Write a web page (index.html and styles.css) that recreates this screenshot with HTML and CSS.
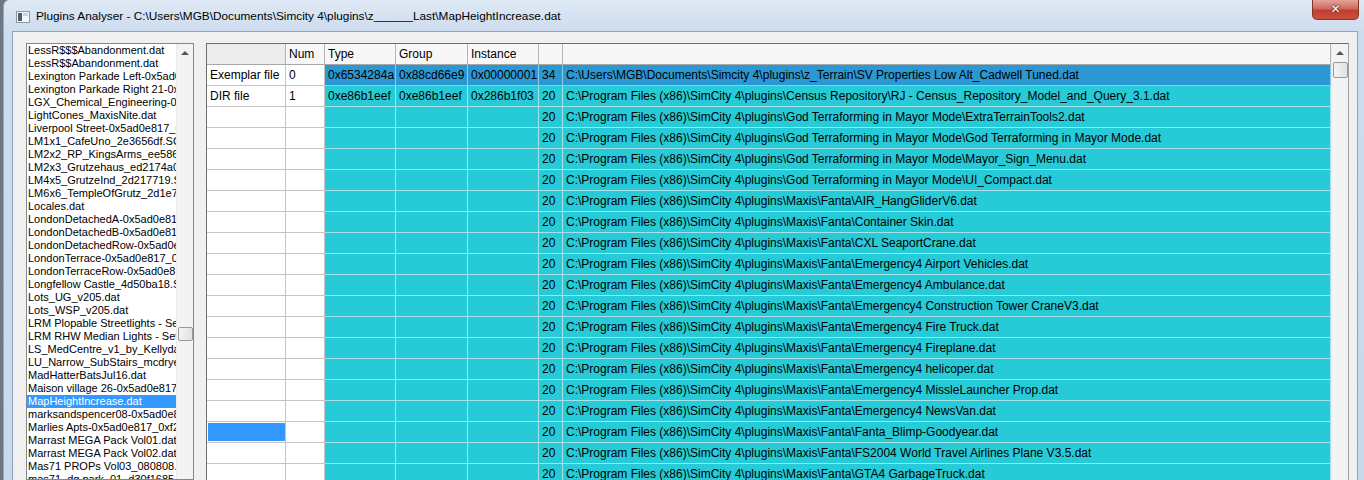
FILE: index.html
```html
<!DOCTYPE html>
<html lang="en">
<head>
  <meta charset="UTF-8">
  <title>Plugins Analyser</title>
  <link rel="stylesheet" href="styles.css">
</head>
<body>

  <div class="window">
    <div class="titlebar">
      <svg class="app-icon" width="14" height="12" viewBox="0 0 14 12">
        <rect x="0.5" y="0.5" width="13" height="11" fill="#f4f6f8" stroke="#8a96a4"/>
        <rect x="2" y="2" width="4" height="8" fill="#4d6070"/>
        <rect x="7" y="2" width="5" height="3" fill="#c9d3dc"/>
      </svg>
      <span class="title">Plugins Analyser - C:\Users\MGB\Documents\Simcity 4\plugins\z______Last\MapHeightIncrease.dat</span>
      <div class="close-btn">&#x2715;</div>
    </div>

    <div class="client">
      <!-- plugin file list -->
      <div class="filelist">
        <ul class="files">
          <li>LessR$$$Abandonment.dat</li>
          <li>LessR$$Abandonment.dat</li>
          <li>Lexington Parkade Left-0x5ad0</li>
          <li>Lexington Parkade Right 21-0x</li>
          <li>LGX_Chemical_Engineering-0x</li>
          <li>LightCones_MaxisNite.dat</li>
          <li>Liverpool Street-0x5ad0e817_0</li>
          <li>LM1x1_CafeUno_2e3656df.SC</li>
          <li>LM2x2_RP_KingsArms_ee5860</li>
          <li>LM2x3_Grutzehaus_ed2174a0</li>
          <li>LM4x5_GrutzeInd_2d217719.S</li>
          <li>LM6x6_TempleOfGrutz_2d1e74</li>
          <li>Locales.dat</li>
          <li>LondonDetachedA-0x5ad0e81</li>
          <li>LondonDetachedB-0x5ad0e81</li>
          <li>LondonDetachedRow-0x5ad0e</li>
          <li>LondonTerrace-0x5ad0e817_0</li>
          <li>LondonTerraceRow-0x5ad0e81</li>
          <li>Longfellow Castle_4d50ba18.S</li>
          <li>Lots_UG_v205.dat</li>
          <li>Lots_WSP_v205.dat</li>
          <li>LRM Plopable Streetlights - Set</li>
          <li>LRM RHW Median Lights - Set</li>
          <li>LS_MedCentre_v1_by_Kellyda</li>
          <li>LU_Narrow_SubStairs_mcdrye.</li>
          <li>MadHatterBatsJul16.dat</li>
          <li>Maison village 26-0x5ad0e817_</li>
          <li class="active">MapHeightIncrease.dat</li>
          <li>marksandspencer08-0x5ad0e8</li>
          <li>Marlies Apts-0x5ad0e817_0xf2</li>
          <li>Marrast MEGA Pack Vol01.dat</li>
          <li>Marrast MEGA Pack Vol02.dat</li>
          <li>Mas71 PROPs Vol03_080808.</li>
          <li>mas71_dg park_01_d30f1685</li>
        </ul>
        <div class="vscroll list-scroll">
          <div class="arrow"></div>
          <div class="thumb"></div>
        </div>
      </div>

      <!-- resource grid -->
      <div class="grid">
        <div class="table">
          <div class="row head">
            <div class="c corner"></div>
            <div class="c">Num</div>
            <div class="c">Type</div>
            <div class="c">Group</div>
            <div class="c">Instance</div>
            <div class="c"></div>
            <div class="c"></div>
          </div>
          <div class="row sel">
            <div class="c rh">Exemplar file</div><div class="c">0</div>
            <div class="c">0x6534284a</div><div class="c">0x88cd66e9</div><div class="c">0x00000001</div>
            <div class="c">34</div><div class="c">C:\Users\MGB\Documents\Simcity 4\plugins\z_Terrain\SV Properties Low Alt_Cadwell Tuned.dat</div>
          </div>
          <div class="row hit">
            <div class="c rh">DIR file</div><div class="c">1</div>
            <div class="c">0xe86b1eef</div><div class="c">0xe86b1eef</div><div class="c">0x286b1f03</div>
            <div class="c">20</div><div class="c">C:\Program Files (x86)\SimCity 4\plugins\Census Repository\RJ - Census_Repository_Model_and_Query_3.1.dat</div>
          </div>
          <div class="row hit">
            <div class="c rh"></div><div class="c"></div><div class="c"></div><div class="c"></div><div class="c"></div>
            <div class="c">20</div><div class="c">C:\Program Files (x86)\SimCity 4\plugins\God Terraforming in Mayor Mode\ExtraTerrainTools2.dat</div>
          </div>
          <div class="row hit">
            <div class="c rh"></div><div class="c"></div><div class="c"></div><div class="c"></div><div class="c"></div>
            <div class="c">20</div><div class="c">C:\Program Files (x86)\SimCity 4\plugins\God Terraforming in Mayor Mode\God Terraforming in Mayor Mode.dat</div>
          </div>
          <div class="row hit">
            <div class="c rh"></div><div class="c"></div><div class="c"></div><div class="c"></div><div class="c"></div>
            <div class="c">20</div><div class="c">C:\Program Files (x86)\SimCity 4\plugins\God Terraforming in Mayor Mode\Mayor_Sign_Menu.dat</div>
          </div>
          <div class="row hit">
            <div class="c rh"></div><div class="c"></div><div class="c"></div><div class="c"></div><div class="c"></div>
            <div class="c">20</div><div class="c">C:\Program Files (x86)\SimCity 4\plugins\God Terraforming in Mayor Mode\UI_Compact.dat</div>
          </div>
          <div class="row hit">
            <div class="c rh"></div><div class="c"></div><div class="c"></div><div class="c"></div><div class="c"></div>
            <div class="c">20</div><div class="c">C:\Program Files (x86)\SimCity 4\plugins\Maxis\Fanta\AIR_HangGliderV6.dat</div>
          </div>
          <div class="row hit">
            <div class="c rh"></div><div class="c"></div><div class="c"></div><div class="c"></div><div class="c"></div>
            <div class="c">20</div><div class="c">C:\Program Files (x86)\SimCity 4\plugins\Maxis\Fanta\Container Skin.dat</div>
          </div>
          <div class="row hit">
            <div class="c rh"></div><div class="c"></div><div class="c"></div><div class="c"></div><div class="c"></div>
            <div class="c">20</div><div class="c">C:\Program Files (x86)\SimCity 4\plugins\Maxis\Fanta\CXL SeaportCrane.dat</div>
          </div>
          <div class="row hit">
            <div class="c rh"></div><div class="c"></div><div class="c"></div><div class="c"></div><div class="c"></div>
            <div class="c">20</div><div class="c">C:\Program Files (x86)\SimCity 4\plugins\Maxis\Fanta\Emergency4 Airport Vehicles.dat</div>
          </div>
          <div class="row hit">
            <div class="c rh"></div><div class="c"></div><div class="c"></div><div class="c"></div><div class="c"></div>
            <div class="c">20</div><div class="c">C:\Program Files (x86)\SimCity 4\plugins\Maxis\Fanta\Emergency4 Ambulance.dat</div>
          </div>
          <div class="row hit">
            <div class="c rh"></div><div class="c"></div><div class="c"></div><div class="c"></div><div class="c"></div>
            <div class="c">20</div><div class="c">C:\Program Files (x86)\SimCity 4\plugins\Maxis\Fanta\Emergency4 Construction Tower CraneV3.dat</div>
          </div>
          <div class="row hit">
            <div class="c rh"></div><div class="c"></div><div class="c"></div><div class="c"></div><div class="c"></div>
            <div class="c">20</div><div class="c">C:\Program Files (x86)\SimCity 4\plugins\Maxis\Fanta\Emergency4 Fire Truck.dat</div>
          </div>
          <div class="row hit">
            <div class="c rh"></div><div class="c"></div><div class="c"></div><div class="c"></div><div class="c"></div>
            <div class="c">20</div><div class="c">C:\Program Files (x86)\SimCity 4\plugins\Maxis\Fanta\Emergency4 Fireplane.dat</div>
          </div>
          <div class="row hit">
            <div class="c rh"></div><div class="c"></div><div class="c"></div><div class="c"></div><div class="c"></div>
            <div class="c">20</div><div class="c">C:\Program Files (x86)\SimCity 4\plugins\Maxis\Fanta\Emergency4 helicoper.dat</div>
          </div>
          <div class="row hit">
            <div class="c rh"></div><div class="c"></div><div class="c"></div><div class="c"></div><div class="c"></div>
            <div class="c">20</div><div class="c">C:\Program Files (x86)\SimCity 4\plugins\Maxis\Fanta\Emergency4 MissleLauncher Prop.dat</div>
          </div>
          <div class="row hit">
            <div class="c rh"></div><div class="c"></div><div class="c"></div><div class="c"></div><div class="c"></div>
            <div class="c">20</div><div class="c">C:\Program Files (x86)\SimCity 4\plugins\Maxis\Fanta\Emergency4 NewsVan.dat</div>
          </div>
          <div class="row hit">
            <div class="c rh focus"></div><div class="c"></div><div class="c"></div><div class="c"></div><div class="c"></div>
            <div class="c">20</div><div class="c">C:\Program Files (x86)\SimCity 4\plugins\Maxis\Fanta\Fanta_Blimp-Goodyear.dat</div>
          </div>
          <div class="row hit">
            <div class="c rh"></div><div class="c"></div><div class="c"></div><div class="c"></div><div class="c"></div>
            <div class="c">20</div><div class="c">C:\Program Files (x86)\SimCity 4\plugins\Maxis\Fanta\FS2004 World Travel Airlines Plane V3.5.dat</div>
          </div>
          <div class="row hit">
            <div class="c rh"></div><div class="c"></div><div class="c"></div><div class="c"></div><div class="c"></div>
            <div class="c">20</div><div class="c">C:\Program Files (x86)\SimCity 4\plugins\Maxis\Fanta\GTA4 GarbageTruck.dat</div>
          </div>
        </div>
        <div class="vscroll grid-scroll">
          <div class="arrow"></div>
          <div class="thumb"></div>
        </div>
      </div>
    </div>
  </div>

</body>
</html>
```

FILE: styles.css
```css
html, body {
  margin: 0;
  height: 480px;
  overflow: hidden;
}
body {
  background-color: #6e7884;
  font-family: "Liberation Sans", Arial, sans-serif;
  color: #000;
}
.window {
  margin-left: 3px;
  height: 480px;
  background: linear-gradient(#dfe9f5, #cddcee 30px, #c9d9ec);
  border-left: 1px solid #97a6b8;
  border-radius: 6px 0 0 0;
  display: flex;
  flex-direction: column;
}
/* title bar */
.titlebar {
  height: 31px;
  display: flex;
  align-items: flex-start;
  flex-shrink: 0;
}
.app-icon {
  margin: 11px 0 0 12px;
}
.title {
  margin: 9px 0 0 6px;
  font-size: 11.8px;
  color: #000;
  white-space: nowrap;
}
.close-btn {
  margin-left: auto;
  margin-right: 5px;
  width: 45px;
  height: 19px;
  background: linear-gradient(#e3a49b, #cf6b5d 45%, #c0402f 55%, #c8513d);
  border: 1px solid #86352b;
  border-top: none;
  border-radius: 0 0 5px 5px;
  color: #fff;
  font-family: "DejaVu Sans", sans-serif;
  font-weight: bold;
  font-size: 12px;
  line-height: 19px;
  text-align: center;
  text-shadow: 0 0 2px #5a1a12, 0 0 1px #5a1a12;
}
/* client area */
.client {
  flex: 1;
  margin: 0 6px 0 8px;
  background-color: #f0f0f0;
  border: 1px solid #8fa3bb;
  border-bottom: none;
  padding: 11px 8px 0 13px;
  display: flex;
  gap: 12px;
  min-height: 0;
}
/* file list */
.filelist {
  width: 168px;
  flex-shrink: 0;
  box-sizing: border-box;
  border: 1px solid #828790;
  background-color: #fff;
  display: flex;
  overflow: hidden;
}
.files {
  list-style: none;
  margin: 0;
  padding: 0;
  width: 149px;
  overflow: hidden;
}
.files li {
  height: 13px;
  line-height: 13px;
  font-size: 11px;
  padding-left: 1px;
  white-space: nowrap;
  overflow: hidden;
}
.files li.active {
  background-color: #3399ff;
  color: #fff;
}
/* scroll bars */
.vscroll {
  width: 17px;
  flex-shrink: 0;
  background-color: #f3f3f3;
  border-left: 1px solid #e9e9e9;
  box-sizing: border-box;
  display: flex;
  flex-direction: column;
  align-items: center;
}
.vscroll .arrow {
  width: 0;
  height: 0;
  margin-top: 7px;
  border-left: 4px solid transparent;
  border-right: 4px solid transparent;
  border-bottom: 4px solid #555;
}
.vscroll .thumb {
  width: 15px;
  box-sizing: border-box;
  border: 1px solid #989898;
  border-radius: 2px;
  background: linear-gradient(90deg, #f4f4f4, #e2e2e2);
}
.list-scroll .thumb {
  margin-top: 272px;
  height: 14px;
}
.grid-scroll .thumb {
  margin-top: 7px;
  height: 16px;
}
/* grid */
.grid {
  flex: 1;
  border: 1px solid #6f6f6f;
  border-right-color: #a0a0a0;
  border-bottom: none;
  background-color: #fff;
  display: flex;
  overflow: hidden;
}
.table {
  flex: 1;
  min-width: 0;
}
.row {
  display: grid;
  grid-template-columns: 79px 39px 71px 72px 71px 24px 1fr;
  height: 21px;
}
.c {
  box-sizing: border-box;
  border-right: 1px solid #c4c4c4;
  border-bottom: 1px solid #c4c4c4;
  padding: 0 3px;
  font-size: 12px;
  line-height: 20px;
  white-space: nowrap;
  overflow: hidden;
}
.row.head .c {
  background-color: #f7f7f7;
  border-right-color: #b4b4b4;
  border-bottom-color: #a8a8a8;
}
.row.head .c.corner {
  background-color: #ececec;
}
.row.sel .c:nth-child(n+3) {
  background-color: #2b98d4;
  border-color: #8ecbe8;
}
.row.hit .c:nth-child(n+3) {
  background-color: #26cbd7;
  border-color: #a6e2e9;
}
.c.rh.focus {
  background-color: #3399ff;
  box-shadow: inset 1px 1px 0 #fff, inset 0 -1px 0 #fff;
}
```
